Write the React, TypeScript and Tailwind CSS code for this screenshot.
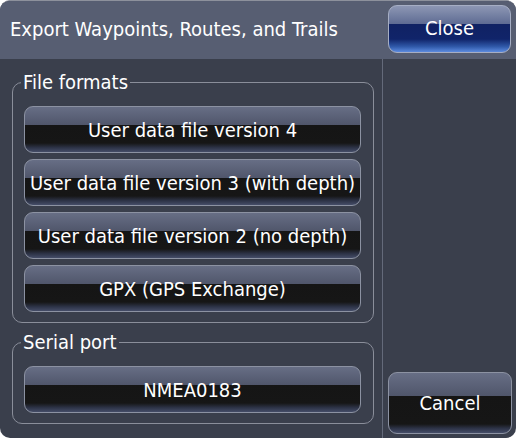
const font = { fontFamily: '"DejaVu Sans Condensed", "DejaVu Sans", sans-serif' };

const grayBtn =
  "flex w-full items-center justify-center rounded-[9px] border border-[#8c92a2] text-[20px] leading-[24px] text-white";

function DataButton({ label }: { label: string }) {
  return (
    <button
      className={`${grayBtn} h-[47px] bg-[linear-gradient(to_bottom,#676e85_0%,#50566b_40%,#151515_40%,#161616_80%,#2c3245_90%,#454d68_100%)]`}
    >
      {label}
    </button>
  );
}

function Group({ title, children }: { title: string; children: React.ReactNode }) {
  return (
    <fieldset className="rounded-[10px] border border-[#8a8e9a] pb-[10px] pl-[11px] pr-[12px]">
      <legend className="ml-[-3px] px-[2px] text-[20px] leading-[20px] text-white">{title}</legend>
      <div className="mt-[14px] flex flex-col gap-[6px]">{children}</div>
    </fieldset>
  );
}

export default function App() {
  return (
    <div
      style={font}
      className="flex h-[438px] w-[516px] flex-col overflow-hidden rounded-[10px] border-t border-[#8d919c] bg-[#3a3f4c]"
    >
      {/* Header */}
      <div className="flex h-[58px] shrink-0 items-start justify-between bg-[#575e72] pl-[10px] pr-[5px]">
        <h1 className="mt-[16px] text-[20px] leading-[24px] text-white">
          Export Waypoints, Routes, and Trails
        </h1>
        <button className="mt-[4px] flex h-[48px] w-[123px] items-center justify-center rounded-[9px] border border-[#a6aec4] bg-[linear-gradient(to_bottom,#8d97b4_0%,#5d6a92_40%,#102263_40%,#10246a_72%,#2f58a8_88%,#5c8be0_100%)] pb-[3px] text-[20px] text-white">
          Close
        </button>
      </div>

      {/* Body */}
      <div className="flex flex-1">
        <div className="flex w-[382px] flex-col gap-[9px] pl-[12px] pr-[8px] pt-[13px]">
          <Group title="File formats">
            <DataButton label="User data file version 4" />
            <DataButton label="User data file version 3 (with depth)" />
            <DataButton label="User data file version 2 (no depth)" />
            <DataButton label="GPX (GPS Exchange)" />
          </Group>
          <Group title="Serial port">
            <DataButton label="NMEA0183" />
          </Group>
        </div>
        <div className="w-px bg-[#646a7a]" />
        <div className="flex flex-1 flex-col justify-end pb-[4px] pl-[5px] pr-[4px]">
          <button
            className={`${grayBtn} h-[62px] bg-[linear-gradient(to_bottom,#676e85_0%,#50566b_38%,#151515_38%,#161616_85%,#2c3245_92%,#454d68_100%)]`}
          >
            Cancel
          </button>
        </div>
      </div>
    </div>
  );
}
